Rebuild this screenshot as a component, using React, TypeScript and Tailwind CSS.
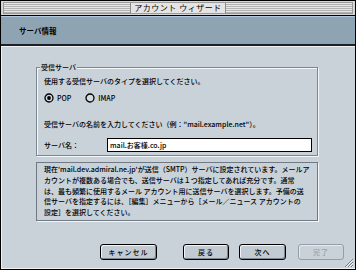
import React from 'react';

const infoLines = [
  "現在'mail.dev.admiral.ne.jp'が送信（SMTP）サーバに設定されています。メールア",
  'カウントが複数ある場合でも、送信サーバは１つ指定してあれば充分です。通常',
  'は、最も頻繁に使用するメール アカウント用に送信サーバを選択します。予備の送',
  '信サーバを指定するには、［編集］メニューから［メール／ニュース アカウントの',
  '設定］を選択してください。',
];

const Radio: React.FC<{ checked?: boolean }> = ({ checked }) => (
  <svg width="10" height="10" viewBox="0 0 10 10" className="shrink-0">
    <circle cx="5" cy="5" r="4" fill="#d4dae0" stroke="#000" strokeWidth="1.3" />
    {checked && <circle cx="5" cy="5" r="1.9" fill="#000" />}
  </svg>
);

const Button: React.FC<{ label: string; className: string; disabled?: boolean }> = ({ label, className, disabled }) => (
  <div
    className={
      disabled
        ? `h-[16px] flex items-center justify-center rounded-[3px] border border-[#959da6] bg-[#c9d1d9] text-[#9aa2ab] shadow-[inset_1px_1px_0_#e6ebf0] ${className}`
        : `h-[16px] flex items-center justify-center rounded-[3px] border border-black bg-[#c2cad2] shadow-[inset_1px_1px_0_#f0f4f8,inset_-1px_-1px_0_#7e8791] ${className}`
    }
  >
    <span className="tracking-[1px]">{label}</span>
  </div>
);

export default function App() {
  return (
    <div className="relative w-[356px] h-[270px] flex flex-col border border-black bg-[#c9d1d9] text-black text-[7px] font-medium leading-none font-['Noto_Sans_CJK_JP',sans-serif] overflow-hidden">
      {/* title bar */}
      <div className="h-[15px] shrink-0 flex border-b border-black bg-[#d6d6d6] px-[2px] py-[1px]">
        <div className="flex-1 flex items-center justify-center border border-[#9a9a9a] bg-[repeating-linear-gradient(180deg,#e8e8e8_0px,#e8e8e8_1px,#b2b2b2_1px,#b2b2b2_2px)]">
          <div className="h-full flex items-center px-[3px] bg-[#e4e4e4] border-x border-[#8a8a8a] text-[8px] font-normal tracking-[0.5px]">
            アカウント ウィザード
          </div>
        </div>
      </div>

      {/* header */}
      <div className="h-[30px] shrink-0 flex items-center pl-[18px] bg-[#8fa4b3] border-t border-t-[#b2c8de] border-b-2 border-b-[#1b2127] font-bold text-[7.5px]">
        サーバ情報
      </div>

      {/* content */}
      <div className="flex-1 flex flex-col pl-[34px] pt-[20px] border-t border-l border-b border-[#eef2f5]">
        <div className="relative w-[282px] h-[89px] flex flex-col pl-[7px] border border-[#7d8792] shadow-[inset_1px_1px_0_#f4f7fa,1px_1px_0_#f4f7fa]">
          <span className="absolute -top-[4px] left-[3px] px-[1px] bg-[#c9d1d9]">受信サーバ</span>
          <div className="mt-[8px] h-[10px] leading-[10px]">使用する受信サーバのタイプを選択してください。</div>
          <div className="mt-[7px] h-[10px] flex items-center">
            <Radio checked />
            <span className="ml-[3px]">POP</span>
            <span className="ml-[14px]"><Radio /></span>
            <span className="ml-[3px]">IMAP</span>
          </div>
          <div className="mt-[16px] h-[10px] leading-[10px]">
            受信サーバの名前を入力してください（例："mail.example.net"）。
          </div>
          <div className="mt-[9px] h-[14px] flex items-center">
            <span className="w-[63px]">サーバ名：</span>
            <div className="w-[205px] h-[14px] flex items-center pl-[2px] bg-white border border-black">
              mail.お客様.co.jp
            </div>
          </div>
        </div>

        <div className="mt-[6px] w-[282px] h-[59px] px-[7px] pt-[1px] border border-[#717a84] shadow-[1px_1px_0_#f4f7fa]">
          {infoLines.map((line) => (
            <div key={line} className="h-[10.8px] leading-[10.8px] whitespace-nowrap">
              {line}
            </div>
          ))}
        </div>

        <div className="mt-[23px] flex">
          <Button label="キャンセル" className="ml-[64px] w-[57px]" />
          <Button label="戻る" className="ml-[26px] w-[46px]" />
          <Button label="次へ" className="ml-[10px] w-[47px]" />
          <Button label="完了" className="ml-[12px] w-[46px]" disabled />
        </div>
      </div>

      {/* resize grip */}
      <svg width="12" height="12" viewBox="0 0 12 12" className="absolute right-[1px] bottom-[1px]">
        <path d="M11 3 L3 11 M11 6 L6 11 M11 9 L9 11" stroke="#6f7882" strokeWidth="1" />
        <path d="M11 4 L4 11 M11 7 L7 11 M11 10 L10 11" stroke="#f2f5f8" strokeWidth="1" />
      </svg>
    </div>
  );
}
